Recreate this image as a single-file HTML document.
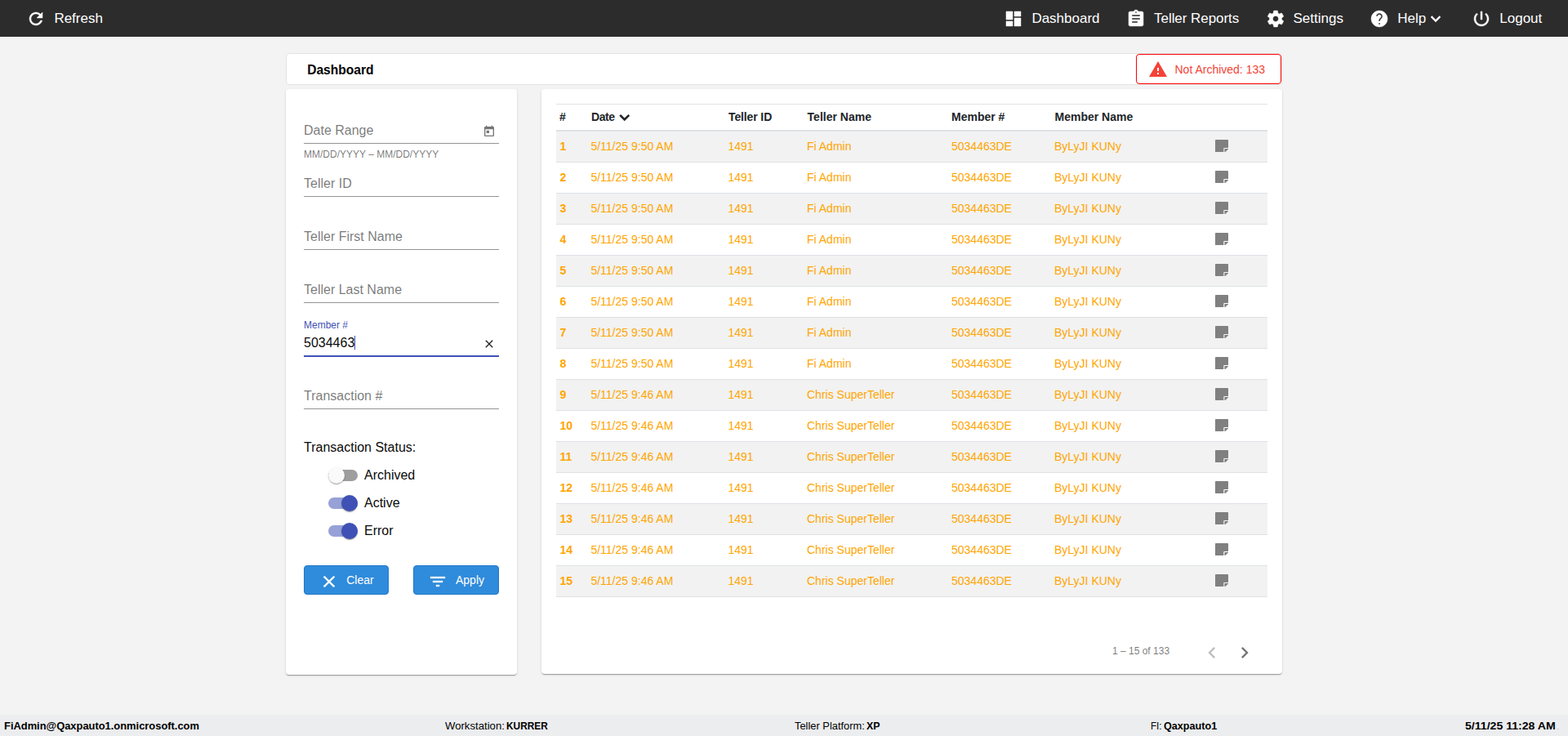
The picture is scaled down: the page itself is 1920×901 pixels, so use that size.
<!DOCTYPE html>
<html lang="en">
<head>
<meta charset="utf-8">
<title>Dashboard</title>
<style>
*{box-sizing:border-box;margin:0;padding:0}
html,body{width:1920px;height:901px;overflow:hidden}
body{background:#f3f3f3;font-family:"Liberation Sans",Arial,sans-serif;font-size:14px;color:#212529;position:relative}
svg{display:block}
.abs{position:absolute}
/* NAV */
#nav{position:absolute;left:0;top:0;width:1920px;height:45px;background:#2c2c2c;color:#fff}
#nav .item{position:absolute;top:0;height:45px;font-size:17px;line-height:45px;white-space:nowrap}
#nav .item svg{position:absolute;top:11px;width:24px;height:24px;fill:#fff;stroke:#fff;stroke-width:.45;overflow:visible}
#nav .item span{position:absolute;top:0}
/* TITLE */
#title{position:absolute;left:350px;top:65px;width:1220px;height:39px;background:#fff;border:1px solid #e3e3e3;border-radius:4px}
#title h1{position:absolute;left:25.2px;top:0;font-size:15.6px;line-height:39px;font-weight:bold;color:#000;white-space:nowrap;transform:scaleX(1.000);transform-origin:0 0}
#badge{position:absolute;left:1391px;top:66px;width:178px;height:37px;border:1px solid #f00;border-radius:4px;background:#fff;color:#f44336;font-size:14px}
#badge svg{position:absolute;left:14.4px;top:6px;width:24px;height:24px;fill:#f44336}
#badge span{position:absolute;left:46.5px;top:0;line-height:36px;white-space:nowrap}
/* PANELS */
.card{position:absolute;background:#fff;border-radius:4px;box-shadow:0 2px 1px -1px rgba(0,0,0,.2),0 1px 1px 0 rgba(0,0,0,.14),0 1px 3px 0 rgba(0,0,0,.12)}
#filters{left:350px;top:109px;width:283px;height:717px}
#results{left:663px;top:109px;width:907px;height:716px}

/* FILTERS */
#filters .fld{position:absolute;left:22px;width:239px;height:65px}
#filters .fld .lbl{position:absolute;left:0;top:42px;font-size:16px;line-height:18px;color:rgba(0,0,0,.54);white-space:nowrap}
#filters .fld .lbl.float{top:22px;font-size:12px;line-height:14px;color:#3f51b5}
#filters .fld .val{position:absolute;left:0;top:42px;font-size:16px;line-height:18px;color:#0a0a0a;white-space:nowrap}
#filters .fld .line{position:absolute;left:0;top:66px;width:239px;height:1px;background:rgba(0,0,0,.42)}
#filters .fld .line.focus{height:2px;background:#3f51b5}
#filters .fld .hint{position:absolute;left:0;top:73px;font-size:12px;line-height:14px;color:rgba(0,0,0,.54);white-space:nowrap}
#filters .fld svg{position:absolute;width:16px;height:16px}
#filters .caret{position:absolute;width:1px;height:17px;background:#3f51b5}
#filters h3{position:absolute;left:22px;top:430px;font-size:16px;line-height:18px;font-weight:normal;color:#0a0a0a;white-space:nowrap}
.tog{position:absolute;left:52px;width:200px;height:24px}
.tog .bar{position:absolute;left:0;top:5px;width:36px;height:14px;border-radius:8px;background:rgba(0,0,0,.38)}
.tog .thumb{position:absolute;left:0;top:2px;width:20px;height:20px;border-radius:50%;background:#fafafa;box-shadow:0 2px 1px -1px rgba(0,0,0,.2),0 1px 1px 0 rgba(0,0,0,.14),0 1px 3px 0 rgba(0,0,0,.12)}
.tog.on .bar{background:rgba(63,81,181,.54)}
.tog.on .thumb{left:16px;background:#3f51b5}
.tog label{position:absolute;left:44px;top:0;font-size:16px;line-height:24px;color:#0a0a0a}
.btn{position:absolute;top:583px;height:36px;border-radius:4px;background:#2f8bdb;border:1px solid #2079c8;color:#fff;font-size:14px}
.btn svg{position:absolute;top:7px;width:24px;height:24px;fill:#fff;stroke:#fff;stroke-width:.35}
.btn span{position:absolute;top:0;line-height:34px;white-space:nowrap}
/* TABLE */
#tbl{position:absolute;left:18px;top:18px;width:871px;border-top:1px solid #dee2e6}
#tbl .hd{position:relative;height:33px;border-bottom:2px solid #dee2e6;font-weight:bold;color:#212529;font-size:14px;line-height:31px}
#tbl .row{position:relative;height:38px;border-bottom:1px solid #dee2e6;color:#ffa500;font-size:14px;line-height:37px}
#tbl .row.odd{background:#f2f2f2}
#tbl span{position:absolute;top:0;white-space:nowrap}
#tbl .c0{left:4px}#tbl .c1{left:43px}#tbl .c2{left:211px}#tbl .row .c0{left:4.4px}#tbl .row .c1{left:42.4px}#tbl .row .c2{left:210.4px}#tbl .c3{left:307px}#tbl .c4{left:484px}#tbl .c5{left:610px}#tbl .hd .c3{left:307.6px}#tbl .hd .c5{left:610.5px}
#tbl .row .c0{font-weight:bold}
#tbl .row svg{position:absolute;left:807px;top:10px;width:16px;height:15.4px;fill:#808080}
#tbl .hd svg{position:absolute;left:76px;top:11px;width:16px;height:12px;fill:#212529}
#pager{position:absolute;left:0;top:670px;width:907px;height:40px}
#pager .rng{position:absolute;left:699px;top:0;font-size:12px;line-height:36px;color:rgba(0,0,0,.54);white-space:nowrap}
#pager svg{position:absolute;top:6px;width:28px;height:28px}
/* FOOTER */
#footer{position:absolute;left:0;top:875px;width:1920px;height:26px;background:#ecedef;font-size:13.7px;line-height:26px;color:#000}
#footer span,#footer b{position:absolute;top:0.6px;white-space:nowrap;transform-origin:0 0}
#footer b{font-weight:bold}
</style>
</head>
<body>
<div id="nav">
  <div class="item" style="left:32.4px"><svg viewBox="0 0 24 24" style="left:0"><path d="M17.65 6.35C16.2 4.9 14.21 4 12 4c-4.42 0-7.99 3.58-7.99 8s3.57 8 7.99 8c3.73 0 6.840-2.550 7.730-6h-2.080c-.82 2.330-3.040 4-5.650 4-3.310 0-6-2.690-6-6s2.690-6 6-6c1.660 0 3.140.69 4.220 1.780L13 11h7V4l-2.350 2.350z"/></svg><span style="left:34px">Refresh</span></div>
  <div class="item" style="left:1229.4px"><svg viewBox="0 0 24 24" style="left:0"><path d="M3 13h8V3H3v10zm0 8h8v-6H3v6zm10 0h8V11h-8v10zm0-18v6h8V3h-8z"/></svg><span style="left:34px">Dashboard</span></div>
  <div class="item" style="left:1378.5px"><svg viewBox="0 0 24 24" style="left:0"><path d="M19 3h-4.18C14.4 1.84 13.3 1 12 1c-1.3 0-2.4.84-2.82 2H5c-1.1 0-2 .9-2 2v14c0 1.1.9 2 2 2h14c1.1 0 2-.9 2-2V5c0-1.1-.9-2-2-2zm-7 0c.55 0 1 .45 1 1s-.45 1-1 1-1-.45-1-1 .45-1 1-1zm2 14H7v-2h7v2zm3-4H7v-2h10v2zm0-4H7V7h10v2z"/></svg><span style="left:34.6px;letter-spacing:-.06px">Teller Reports</span></div>
  <div class="item" style="left:1549.5px"><svg viewBox="0 0 24 24" style="left:0"><path d="M19.43 12.98c.04-.32.07-.64.07-.98s-.03-.66-.07-.98l2.11-1.65c.19-.15.24-.42.12-.64l-2-3.46c-.12-.22-.39-.3-.61-.22l-2.49 1c-.52-.4-1.08-.73-1.69-.98l-.38-2.65C14.46 2.18 14.25 2 14 2h-4c-.25 0-.46.18-.49.42l-.38 2.65c-.61.25-1.17.59-1.69.98l-2.49-1c-.23-.09-.49 0-.61.22l-2 3.46c-.13.22-.07.49.12.64l2.11 1.65c-.04.32-.07.65-.07.98s.03.66.07.98l-2.11 1.65c-.19.15-.24.42-.12.64l2 3.46c.12.22.39.3.61.22l2.49-1c.52.4 1.08.73 1.69.98l.38 2.65c.03.24.24.42.49.42h4c.25 0 .46-.18.49-.42l.38-2.65c.61-.25 1.17-.59 1.69-.98l2.49 1c.23.09.49 0 .61-.22l2-3.46c.12-.22.07-.49-.12-.64l-2.11-1.65zM12 15.5c-1.93 0-3.5-1.57-3.5-3.500s1.570-3.500 3.500-3.500 3.500 1.570 3.500 3.500-1.570 3.500-3.500 3.500z"/></svg><span style="left:34px">Settings</span></div>
  <div class="item" style="left:1677.2px"><svg viewBox="0 0 24 24" style="left:0"><path d="M12 2C6.48 2 2 6.48 2 12s4.48 10 10 10 10-4.48 10-10S17.52 2 12 2zm1 17h-2v-2h2v2zm2.07-7.75l-.9.92C13.45 12.9 13 13.5 13 15h-2v-.5c0-1.1.45-2.1 1.17-2.83l1.24-1.26c.37-.36.59-.86.59-1.41 0-1.1-.9-2-2-2s-2 .9-2 2H8c0-2.21 1.79-4 4-4s4 1.79 4 4c0 .88-.36 1.68-.93 2.25z"/></svg><span style="left:34px">Help</span><svg viewBox="0 0 24 24" style="left:69px;top:11px"><path d="M16.59 8.59L12 13.17 7.41 8.59 6 10l6 6 6-6z"/></svg></div>
  <div class="item" style="left:1802.3px"><svg viewBox="0 0 24 24" style="left:0"><path d="M13 3h-2v10h2V3zm4.83 2.17l-1.42 1.42C17.99 7.86 19 9.81 19 12c0 3.87-3.13 7-7 7s-7-3.13-7-7c0-2.19 1.01-4.14 2.58-5.42L6.17 5.17C4.23 6.82 3 9.26 3 12c0 4.97 4.03 9 9 9s9-4.03 9-9c0-2.74-1.23-5.18-3.17-6.83z"/></svg><span style="left:34px">Logout</span></div>
</div>
<div id="title"><h1>Dashboard</h1></div>
<div id="badge"><svg viewBox="0 0 24 24"><path d="M1 21h22L12 2 1 21zm12-3h-2v-2h2v2zm0-4h-2v-4h2v4z"/></svg><span>Not Archived: 133</span></div>
<div class="card" id="filters">
  <div class="fld" style="top:0px"><div class="lbl">Date Range</div><svg viewBox="0 0 24 24" style="left:219px;top:44px;fill:rgba(0,0,0,.54)"><path d="M19 3h-1V1h-2v2H8V1H6v2H5c-1.11 0-1.99.9-1.99 2L3 19c0 1.1.89 2 2 2h14c1.1 0 2-.9 2-2V5c0-1.1-.9-2-2-2zm0 16H5V8h14v11zM7 10h5v5H7z"/></svg><div class="hint">MM/DD/YYYY – MM/DD/YYYY</div><div class="line"></div></div>
  <div class="fld" style="top:65px"><div class="lbl">Teller ID</div><div class="line"></div></div>
  <div class="fld" style="top:130px"><div class="lbl">Teller First Name</div><div class="line"></div></div>
  <div class="fld" style="top:195px"><div class="lbl">Teller Last Name</div><div class="line"></div></div>
  <div class="fld" style="top:260px"><div class="lbl float">Member #</div><div class="val">5034463</div><div class="caret" style="left:62px;top:42px"></div><svg viewBox="0 0 24 24" style="left:219px;top:44px;fill:rgba(0,0,0,.87)"><path d="M19 6.41L17.59 5 12 10.59 6.41 5 5 6.41 10.59 12 5 17.59 6.41 19 12 13.41 17.59 19 19 17.59 13.41 12z"/></svg><div class="line focus"></div></div>
  <div class="fld" style="top:325px"><div class="lbl">Transaction #</div><div class="line"></div></div>
  <h3>Transaction Status:</h3>
  <div class="tog" style="top:461px"><div class="bar"></div><div class="thumb"></div><label>Archived</label></div>
  <div class="tog on" style="top:495px"><div class="bar"></div><div class="thumb"></div><label>Active</label></div>
  <div class="tog on" style="top:529px"><div class="bar"></div><div class="thumb"></div><label>Error</label></div>
  <div class="btn" style="left:22px;width:104px"><svg viewBox="0 0 24 24" style="left:17.5px"><path d="M19 6.41L17.59 5 12 10.59 6.41 5 5 6.41 10.59 12 5 17.59 6.41 19 12 13.41 17.59 19 19 17.59 13.41 12z"/></svg><span style="left:51.2px">Clear</span></div>
  <div class="btn" style="left:156px;width:105px"><svg viewBox="0 0 24 24" style="left:17px"><path d="M10 18h4v-2h-4v2zM3 6v2h18V6H3zm3 7h12v-2H6v2z"/></svg><span style="left:51px">Apply</span></div>
</div>
<div class="card" id="results">
  <div id="tbl">
    <div class="hd"><span class="c0">#</span><span class="c1" style="letter-spacing:-.4px">Date</span><svg viewBox="0 0 16 12"><path d="M1.300 2.800L3.100 1L7.750 5.600L12.400 1L14.200 2.800L7.750 9.200z"/></svg><span class="c2" style="letter-spacing:-.12px">Teller ID</span><span class="c3">Teller Name</span><span class="c4">Member #</span><span class="c5">Member Name</span></div>
    <div class="row odd"><span class="c0">1</span><span class="c1">5/11/25 9:50 AM</span><span class="c2">1491</span><span class="c3">Fi Admin</span><span class="c4">5034463DE</span><span class="c5">ByLyJI KUNy</span><svg viewBox="0 32 448 448" preserveAspectRatio="none"><path d="M312 320h136V56c0-13.3-10.7-24-24-24H24C10.7 32 0 42.7 0 56v400c0 13.3 10.7 24 24 24h264V344c0-13.2 10.8-24 24-24zm129 55l-98 98c-4.5 4.5-10.600 7-17 7h-6V352h128v6.100c0 6.300-2.500 12.400-7 16.900z"/></svg></div>
    <div class="row"><span class="c0">2</span><span class="c1">5/11/25 9:50 AM</span><span class="c2">1491</span><span class="c3">Fi Admin</span><span class="c4">5034463DE</span><span class="c5">ByLyJI KUNy</span><svg viewBox="0 32 448 448" preserveAspectRatio="none"><path d="M312 320h136V56c0-13.3-10.7-24-24-24H24C10.7 32 0 42.7 0 56v400c0 13.3 10.7 24 24 24h264V344c0-13.2 10.8-24 24-24zm129 55l-98 98c-4.5 4.5-10.600 7-17 7h-6V352h128v6.100c0 6.300-2.500 12.400-7 16.900z"/></svg></div>
    <div class="row odd"><span class="c0">3</span><span class="c1">5/11/25 9:50 AM</span><span class="c2">1491</span><span class="c3">Fi Admin</span><span class="c4">5034463DE</span><span class="c5">ByLyJI KUNy</span><svg viewBox="0 32 448 448" preserveAspectRatio="none"><path d="M312 320h136V56c0-13.3-10.7-24-24-24H24C10.7 32 0 42.7 0 56v400c0 13.3 10.7 24 24 24h264V344c0-13.2 10.8-24 24-24zm129 55l-98 98c-4.5 4.5-10.600 7-17 7h-6V352h128v6.100c0 6.300-2.500 12.400-7 16.900z"/></svg></div>
    <div class="row"><span class="c0">4</span><span class="c1">5/11/25 9:50 AM</span><span class="c2">1491</span><span class="c3">Fi Admin</span><span class="c4">5034463DE</span><span class="c5">ByLyJI KUNy</span><svg viewBox="0 32 448 448" preserveAspectRatio="none"><path d="M312 320h136V56c0-13.3-10.7-24-24-24H24C10.7 32 0 42.7 0 56v400c0 13.3 10.7 24 24 24h264V344c0-13.2 10.8-24 24-24zm129 55l-98 98c-4.5 4.5-10.600 7-17 7h-6V352h128v6.100c0 6.300-2.500 12.400-7 16.900z"/></svg></div>
    <div class="row odd"><span class="c0">5</span><span class="c1">5/11/25 9:50 AM</span><span class="c2">1491</span><span class="c3">Fi Admin</span><span class="c4">5034463DE</span><span class="c5">ByLyJI KUNy</span><svg viewBox="0 32 448 448" preserveAspectRatio="none"><path d="M312 320h136V56c0-13.3-10.7-24-24-24H24C10.7 32 0 42.7 0 56v400c0 13.3 10.7 24 24 24h264V344c0-13.2 10.8-24 24-24zm129 55l-98 98c-4.5 4.5-10.600 7-17 7h-6V352h128v6.100c0 6.300-2.500 12.400-7 16.900z"/></svg></div>
    <div class="row"><span class="c0">6</span><span class="c1">5/11/25 9:50 AM</span><span class="c2">1491</span><span class="c3">Fi Admin</span><span class="c4">5034463DE</span><span class="c5">ByLyJI KUNy</span><svg viewBox="0 32 448 448" preserveAspectRatio="none"><path d="M312 320h136V56c0-13.3-10.7-24-24-24H24C10.7 32 0 42.7 0 56v400c0 13.3 10.7 24 24 24h264V344c0-13.2 10.8-24 24-24zm129 55l-98 98c-4.5 4.5-10.600 7-17 7h-6V352h128v6.100c0 6.300-2.500 12.400-7 16.900z"/></svg></div>
    <div class="row odd"><span class="c0">7</span><span class="c1">5/11/25 9:50 AM</span><span class="c2">1491</span><span class="c3">Fi Admin</span><span class="c4">5034463DE</span><span class="c5">ByLyJI KUNy</span><svg viewBox="0 32 448 448" preserveAspectRatio="none"><path d="M312 320h136V56c0-13.3-10.7-24-24-24H24C10.7 32 0 42.7 0 56v400c0 13.3 10.7 24 24 24h264V344c0-13.2 10.8-24 24-24zm129 55l-98 98c-4.5 4.5-10.600 7-17 7h-6V352h128v6.100c0 6.300-2.500 12.400-7 16.900z"/></svg></div>
    <div class="row"><span class="c0">8</span><span class="c1">5/11/25 9:50 AM</span><span class="c2">1491</span><span class="c3">Fi Admin</span><span class="c4">5034463DE</span><span class="c5">ByLyJI KUNy</span><svg viewBox="0 32 448 448" preserveAspectRatio="none"><path d="M312 320h136V56c0-13.3-10.7-24-24-24H24C10.7 32 0 42.7 0 56v400c0 13.3 10.7 24 24 24h264V344c0-13.2 10.8-24 24-24zm129 55l-98 98c-4.5 4.5-10.600 7-17 7h-6V352h128v6.100c0 6.300-2.500 12.400-7 16.900z"/></svg></div>
    <div class="row odd"><span class="c0">9</span><span class="c1">5/11/25 9:46 AM</span><span class="c2">1491</span><span class="c3">Chris SuperTeller</span><span class="c4">5034463DE</span><span class="c5">ByLyJI KUNy</span><svg viewBox="0 32 448 448" preserveAspectRatio="none"><path d="M312 320h136V56c0-13.3-10.7-24-24-24H24C10.7 32 0 42.7 0 56v400c0 13.3 10.7 24 24 24h264V344c0-13.2 10.8-24 24-24zm129 55l-98 98c-4.5 4.5-10.600 7-17 7h-6V352h128v6.100c0 6.300-2.500 12.400-7 16.900z"/></svg></div>
    <div class="row"><span class="c0">10</span><span class="c1">5/11/25 9:46 AM</span><span class="c2">1491</span><span class="c3">Chris SuperTeller</span><span class="c4">5034463DE</span><span class="c5">ByLyJI KUNy</span><svg viewBox="0 32 448 448" preserveAspectRatio="none"><path d="M312 320h136V56c0-13.3-10.7-24-24-24H24C10.7 32 0 42.7 0 56v400c0 13.3 10.7 24 24 24h264V344c0-13.2 10.8-24 24-24zm129 55l-98 98c-4.5 4.5-10.600 7-17 7h-6V352h128v6.100c0 6.300-2.500 12.400-7 16.900z"/></svg></div>
    <div class="row odd"><span class="c0">11</span><span class="c1">5/11/25 9:46 AM</span><span class="c2">1491</span><span class="c3">Chris SuperTeller</span><span class="c4">5034463DE</span><span class="c5">ByLyJI KUNy</span><svg viewBox="0 32 448 448" preserveAspectRatio="none"><path d="M312 320h136V56c0-13.3-10.7-24-24-24H24C10.7 32 0 42.7 0 56v400c0 13.3 10.7 24 24 24h264V344c0-13.2 10.8-24 24-24zm129 55l-98 98c-4.5 4.5-10.600 7-17 7h-6V352h128v6.100c0 6.300-2.500 12.400-7 16.900z"/></svg></div>
    <div class="row"><span class="c0">12</span><span class="c1">5/11/25 9:46 AM</span><span class="c2">1491</span><span class="c3">Chris SuperTeller</span><span class="c4">5034463DE</span><span class="c5">ByLyJI KUNy</span><svg viewBox="0 32 448 448" preserveAspectRatio="none"><path d="M312 320h136V56c0-13.3-10.7-24-24-24H24C10.7 32 0 42.7 0 56v400c0 13.3 10.7 24 24 24h264V344c0-13.2 10.8-24 24-24zm129 55l-98 98c-4.5 4.5-10.600 7-17 7h-6V352h128v6.100c0 6.300-2.500 12.400-7 16.900z"/></svg></div>
    <div class="row odd"><span class="c0">13</span><span class="c1">5/11/25 9:46 AM</span><span class="c2">1491</span><span class="c3">Chris SuperTeller</span><span class="c4">5034463DE</span><span class="c5">ByLyJI KUNy</span><svg viewBox="0 32 448 448" preserveAspectRatio="none"><path d="M312 320h136V56c0-13.3-10.7-24-24-24H24C10.7 32 0 42.7 0 56v400c0 13.3 10.7 24 24 24h264V344c0-13.2 10.8-24 24-24zm129 55l-98 98c-4.5 4.5-10.600 7-17 7h-6V352h128v6.100c0 6.300-2.500 12.400-7 16.900z"/></svg></div>
    <div class="row"><span class="c0">14</span><span class="c1">5/11/25 9:46 AM</span><span class="c2">1491</span><span class="c3">Chris SuperTeller</span><span class="c4">5034463DE</span><span class="c5">ByLyJI KUNy</span><svg viewBox="0 32 448 448" preserveAspectRatio="none"><path d="M312 320h136V56c0-13.3-10.7-24-24-24H24C10.7 32 0 42.7 0 56v400c0 13.3 10.7 24 24 24h264V344c0-13.2 10.8-24 24-24zm129 55l-98 98c-4.5 4.5-10.600 7-17 7h-6V352h128v6.100c0 6.300-2.500 12.400-7 16.900z"/></svg></div>
    <div class="row odd"><span class="c0">15</span><span class="c1">5/11/25 9:46 AM</span><span class="c2">1491</span><span class="c3">Chris SuperTeller</span><span class="c4">5034463DE</span><span class="c5">ByLyJI KUNy</span><svg viewBox="0 32 448 448" preserveAspectRatio="none"><path d="M312 320h136V56c0-13.3-10.7-24-24-24H24C10.7 32 0 42.7 0 56v400c0 13.3 10.7 24 24 24h264V344c0-13.2 10.8-24 24-24zm129 55l-98 98c-4.5 4.5-10.600 7-17 7h-6V352h128v6.100c0 6.300-2.500 12.400-7 16.900z"/></svg></div>
  </div>
  <div id="pager"><div class="rng">1 – 15 of 133</div><svg viewBox="0 0 24 24" style="left:807px;fill:rgba(0,0,0,.26)"><path d="M15.41 7.41L14 6l-6 6 6 6 1.41-1.41L10.83 12z"/></svg><svg viewBox="0 0 24 24" style="left:847px;fill:rgba(0,0,0,.54)"><path d="M10 6L8.59 7.41 13.17 12l-4.58 4.59L10 18l6-6z"/></svg></div>
</div>
<div id="footer">
  <b style="left:4.6px;transform:scaleX(0.942)">FiAdmin@Qaxpauto1.onmicrosoft.com</b>
  <span style="left:545.0px;transform:scaleX(0.961)">Workstation:</span>
  <b style="left:620.4px;transform:scaleX(0.868)">KURRER</b>
  <span style="left:972.5px;transform:scaleX(0.940)">Teller Platform:</span>
  <b style="left:1061.2px;transform:scaleX(0.903)">XP</b>
  <span style="left:1408.8px;transform:scaleX(0.850)">FI:</span>
  <b style="left:1425.4px;transform:scaleX(0.921)">Qaxpauto1</b>
  <b style="left:1794.2px;transform:scaleX(1.030)">5/11/25 11:28 AM</b>
  <span style="left:1906px;color:#aab6c9;font-size:11px">.</span>
</div>
</body>
</html>
